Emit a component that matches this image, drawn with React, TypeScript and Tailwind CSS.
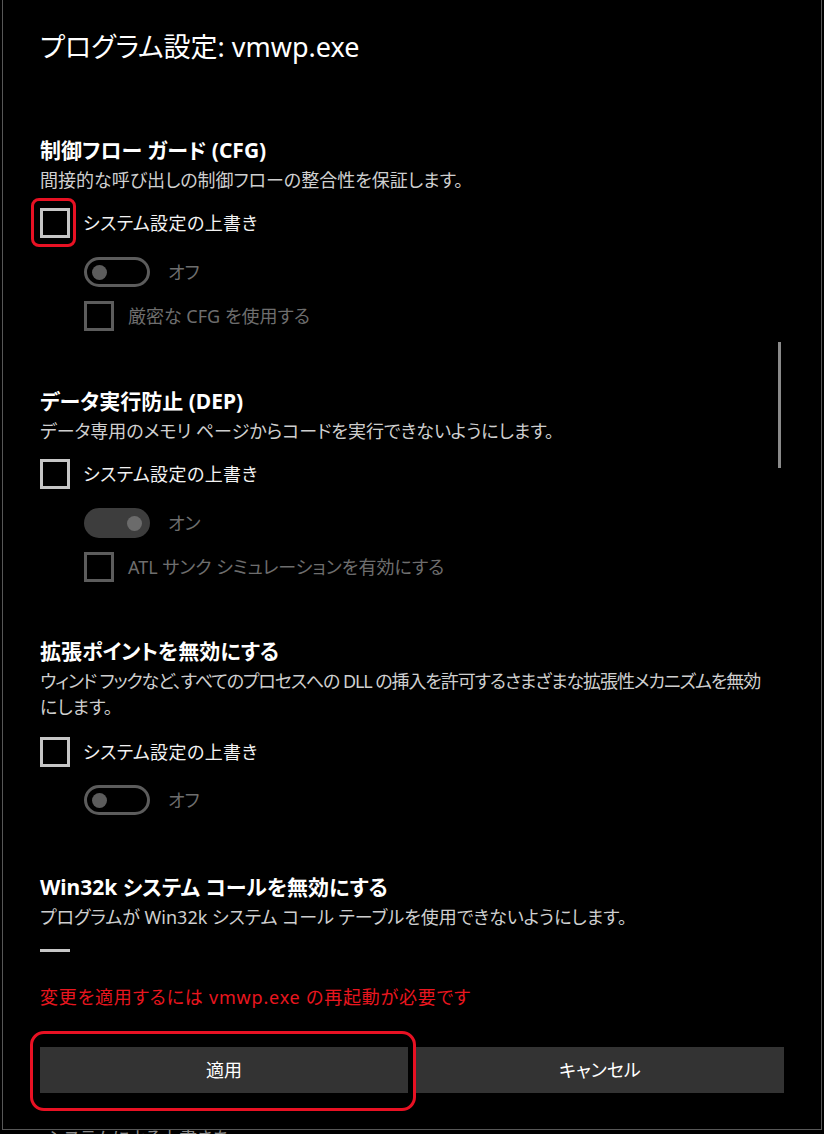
import React from 'react';

function Checkbox({ disabled = false }: { disabled?: boolean }) {
    return (
        <div
            className={`w-[30px] h-[30px] shrink-0 border-[3px] ${disabled ? 'border-[#5c5c5c]' : 'border-[#c6c6c6]'}`}
        ></div>
    );
}

function Toggle({ on }: { on: boolean }) {
    if (on) {
        return (
            <div className="w-[66px] h-[30px] shrink-0 rounded-full bg-[#3d3d3d] flex items-center justify-end pr-[8px]">
                <div className="w-[15px] h-[15px] rounded-full bg-[#6b6b6b]"></div>
            </div>
        );
    }
    return (
        <div className="w-[66px] h-[30px] shrink-0 rounded-full border-[3px] border-[#5c5c5c] flex items-center pl-[5px]">
            <div className="w-[15px] h-[15px] rounded-full bg-[#5c5c5c]"></div>
        </div>
    );
}

function OverrideRow({ highlight = false, className = '' }: { highlight?: boolean; className?: string }) {
    return (
        <div className={`flex items-center h-[30px] ${className}`}>
            <div className="relative">
                <Checkbox />
                {highlight && (
                    <div className="absolute left-[-9px] top-[-10px] right-[-6px] bottom-[-9px] border-[3px] border-[#e81123] rounded-[8px]"></div>
                )}
            </div>
            <span className="ml-[13px] text-[18px] leading-[30px] text-[#f2f2f2] tracking-[0.4px]">システム設定の上書き</span>
        </div>
    );
}

function ToggleRow({ on, className = '' }: { on: boolean; className?: string }) {
    return (
        <div className={`flex items-center h-[30px] pl-[44px] ${className}`}>
            <Toggle on={on} />
            <span className="ml-[18px] text-[18px] leading-[30px] text-[#6e6e6e]">{on ? 'オン' : 'オフ'}</span>
        </div>
    );
}

function SubCheckRow({ label, className = '' }: { label: string; className?: string }) {
    return (
        <div className={`flex items-center h-[30px] pl-[44px] ${className}`}>
            <Checkbox disabled />
            <span className="ml-[14px] text-[18px] leading-[30px] text-[#6e6e6e]">{label}</span>
        </div>
    );
}

function SectionHead({ title, children, className = '' }: { title: string; children: React.ReactNode; className?: string }) {
    return (
        <div className={className}>
            <h3 className="text-[21px] leading-[28px] font-bold text-white">{title}</h3>
            <p className="mt-[3px] text-[18px] leading-[26px] text-[#cfcfcf]">{children}</p>
        </div>
    );
}

export default function App() {
    return (
        <div className="w-[824px] h-[1134px] bg-black overflow-hidden font-['Noto_Sans','Noto_Sans_CJK_JP',sans-serif] [font-feature-settings:'palt']">
            <div className="relative ml-[2px] w-[820px] h-[1130px] border-x border-b border-[#575757] pl-[37px] pr-[37px] flex flex-col">
                {/* title */}
                <h1 className="pt-[29px] text-[27px] leading-[36px] text-white">プログラム設定: vmwp.exe</h1>

                {/* scrolling settings list */}
                <div className="mt-[35px] -mx-[37px] px-[37px] h-[852px] overflow-hidden flex flex-col">
                    <SectionHead title="制御フロー ガード (CFG)" className="mt-[36px]">
                        間接的な呼び出しの制御フローの整合性を保証します。
                    </SectionHead>
                    <OverrideRow highlight className="mt-[15px]" />
                    <ToggleRow on={false} className="mt-[19px]" />
                    <SubCheckRow label="厳密な CFG を使用する" className="mt-[14px]" />

                    <SectionHead title="データ実行防止 (DEP)" className="mt-[56px]">
                        データ専用のメモリ ページからコードを実行できないようにします。
                    </SectionHead>
                    <OverrideRow className="mt-[15px]" />
                    <ToggleRow on className="mt-[19px]" />
                    <SubCheckRow label="ATL サンク シミュレーションを有効にする" className="mt-[14px]" />

                    <SectionHead title="拡張ポイントを無効にする" className="mt-[55px]">
                        <span className="whitespace-nowrap tracking-[-1.1px]">ウィンド フックなど、すべてのプロセスへの DLL の挿入を許可するさまざまな拡張性メカニズムを無効</span>
                        <br />
                        にします。
                    </SectionHead>
                    <OverrideRow className="mt-[17px]" />
                    <ToggleRow on={false} className="mt-[18px]" />

                    <SectionHead title="Win32k システム コールを無効にする" className="mt-[58px]">
                        プログラムが Win32k システム コール テーブルを使用できないようにします。
                    </SectionHead>
                    <div className="mt-[19px]">
                        <Checkbox />
                    </div>
                </div>

                <p className="mt-[32px] text-[18px] leading-[26px] text-[#e8161f] tracking-[0.8px]">変更を適用するには vmwp.exe の再起動が必要です</p>

                <div className="mt-[37px] flex gap-[8px] w-[744px]">
                    <div className="relative flex-1">
                        <button className="w-full h-[46px] bg-[#333333] text-white text-[18px]">適用</button>
                        <div className="absolute left-[-10px] top-[-16px] right-[-8px] bottom-[-18px] border-[3px] border-[#e81123] rounded-[14px] pointer-events-none"></div>
                    </div>
                    <button className="flex-1 h-[46px] bg-[#333333] text-white text-[18px]">キャンセル</button>
                </div>

                {/* scrollbar thumb */}
                <div className="absolute top-[342px] right-[40px] w-[3px] h-[126px] bg-[#8a8a8a]"></div>
            </div>
            <div className="h-[4px] overflow-hidden pl-[47px]">
                <div className="text-[18px] leading-[18px] text-[#8a8a8a] mt-[-1px]">システムによる上書きを</div>
            </div>
        </div>
    );
}
